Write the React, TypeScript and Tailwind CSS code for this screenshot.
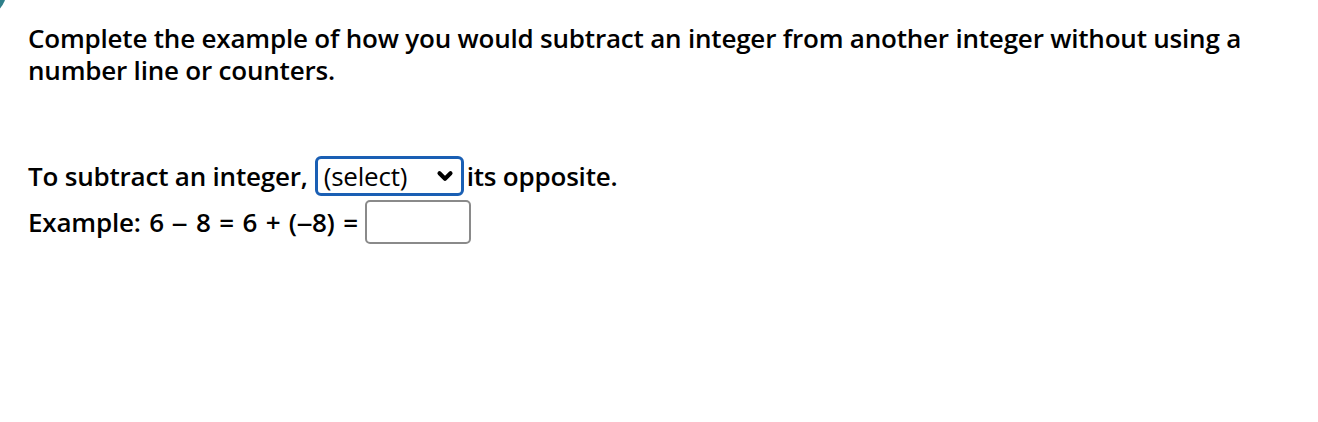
import { ChevronDown } from 'lucide-react';

export default function App() {
  return (
    <div className="relative w-[1318px] h-[422px] overflow-hidden bg-white text-black font-['Open_Sans','Noto_Sans',sans-serif]">
      {/* corner decoration */}
      <div className="absolute -left-[40px] -top-[30px] w-[46px] h-[46px] rounded-full bg-[#2f7f8a]" />

      <div className="w-[1270px] pl-[28px] pt-[22px]">
        <p className="text-[26px] leading-[32px] font-semibold tracking-[-0.2px]">
          Complete the example of how you would subtract an integer from another integer without using a number line or counters.
        </p>

        <div className="mt-[70px] text-[26px] font-semibold tracking-[-0.2px]">
          <div className="flex h-[40px] items-center">
            <span>To subtract an integer,</span>
            <div className="ml-[7px] mr-[3px] flex h-[40px] w-[149px] items-center justify-between rounded-[6px] border-[3px] border-[#1a5fb4] pl-[6px] pr-[5px] font-normal">
              <span className="leading-none">(select)</span>
              <ChevronDown className="h-[22px] w-[22px]" strokeWidth={4.5} />
            </div>
            <span>its opposite.</span>
          </div>
          <div className="mt-[4px] flex h-[44px] items-center">
            <span className="[word-spacing:2px]">
              Example: 6 <span className="inline-block w-[15px] scale-x-125 text-center">–</span> 8 = 6 + (<span className="inline-block w-[15px] scale-x-125 text-center">–</span>8) =
            </span>
            <div className="ml-[7px] h-[44px] w-[106px] rounded-[5px] border-2 border-[#8a8a8a]" />
          </div>
        </div>
      </div>
    </div>
  );
}
